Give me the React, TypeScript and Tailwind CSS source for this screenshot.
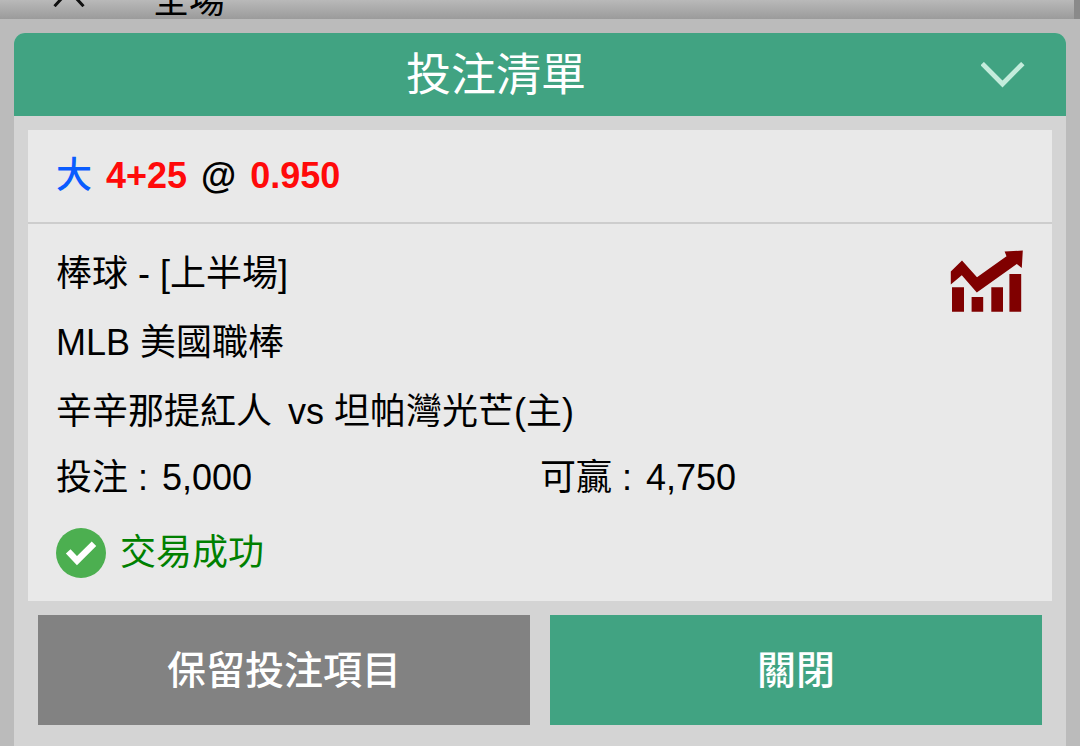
function ChevronDown() {
  return (
    <svg width="44" height="26" viewBox="0 0 44 26" fill="none" stroke="#c4ecdc" strokeWidth="4.8" aria-hidden="true">
      <path d="M1.2 1.6 L21.5 22 L41.8 1.6" />
    </svg>
  );
}

function CollapseMark() {
  return (
    <svg width="32" height="20" viewBox="0 0 32 20" fill="none" stroke="#111" strokeWidth="3" aria-hidden="true">
      <path d="M1.5 19.2 L16 3.5 L30.5 19.2" />
    </svg>
  );
}

function TrendIcon() {
  return (
    <svg width="73" height="62" viewBox="0 0 73 62" fill="#800000" aria-hidden="true">
      <path d="M0.8 21.5 L12 10.6 L27 27.2 L56.5 6.2 L54.6 1.6 L72.8 0.6 L71.8 18 L66.8 14 L26.8 42.6 L11.8 25.2 L0.8 34.4 Z" />
      <path d="M2 37.3h12v24.5H2z M21.6 47h11.6v14.8h-11.6z M41.3 37.3h11.7v24.5h-11.7z M59.4 24h11.8v37.8h-11.8z" />
    </svg>
  );
}

function SuccessIcon() {
  return (
    <svg width="50" height="50" viewBox="0 0 50 50" aria-hidden="true">
      <circle cx="25" cy="25" r="25" fill="#4caf50" />
      <path d="M12.2 23.4 L21 32.6 L38 15.8" fill="none" stroke="#fff" strokeWidth="6.4" />
    </svg>
  );
}

export default function App() {
  return (
    <div className="min-h-screen flex flex-col bg-[#bbbbbb] text-black text-[36px] leading-[48px] font-['Liberation_Sans','Noto_Sans_CJK_TC',sans-serif]">
      <div className="flex h-[19px] overflow-hidden">
        <div className="flex flex-1 items-end gap-[68px] bg-linear-to-b from-[#b9b9b9] to-[#9b9b9b] pl-[53px]">
          <div className="pb-3">
            <CollapseMark />
          </div>
          <span className="leading-9">全場</span>
        </div>
        <div className="w-[6px] bg-[#8a8a8a]" />
      </div>

      <main className="mx-[14px] mt-[14px] flex flex-1 flex-col rounded-t-[11px] bg-[#d4d4d4]">
        <header className="flex h-[83px] items-center rounded-t-[11px] bg-[#41a382] text-white">
          <h1 className="flex-1 pt-[2px] text-center text-[45px]">投注清單</h1>
          <button type="button" aria-label="收合" className="flex h-full w-[88px] items-center pl-[3px]">
            <ChevronDown />
          </button>
        </header>

        <section className="mx-[14px] mt-[14px] bg-[#e9e9e9]">
          <div className="flex gap-[14px] border-b-2 border-[#cdcdcd] px-7 py-[22px] font-bold">
            <span className="font-medium text-[#0a5cff]">大</span>
            <span className="text-[#ff0a0a]">4+25</span>
            <span>@</span>
            <span className="text-[#ff0a0a]">0.950</span>
          </div>

          <div className="px-7 pt-[26px] pb-[23px]">
            <div className="flex justify-between">
              <div className="flex flex-col gap-[21px]">
                <p>棒球 - [上半場]</p>
                <p>MLB 美國職棒</p>
                <p className="flex gap-4">
                  <span>辛辛那提紅人</span>
                  <span>vs 坦帕灣光芒(主)</span>
                </p>
              </div>
              <a href="#stats" aria-label="統計" className="mr-[1px]">
                <TrendIcon />
              </a>
            </div>
            <dl className="mt-[18px] grid grid-cols-2">
              <div className="flex gap-[14px]">
                <dt>投注 :</dt>
                <dd>5,000</dd>
              </div>
              <div className="flex gap-[14px]">
                <dt>可贏 :</dt>
                <dd>4,750</dd>
              </div>
            </dl>
            <div className="mt-[26px] flex items-center gap-[14px] text-[#008000]">
              <SuccessIcon />
              <p>交易成功</p>
            </div>
          </div>
        </section>

        <div className="grid grid-cols-2 gap-5 px-6 pt-[14px] pb-5 text-[39px] font-medium text-white">
          <button type="button" className="h-[110px] bg-[#828282] pt-[2px]">
            保留投注項目
          </button>
          <button type="button" className="h-[110px] bg-[#41a382] pt-[2px]">
            關閉
          </button>
        </div>
      </main>
    </div>
  );
}
